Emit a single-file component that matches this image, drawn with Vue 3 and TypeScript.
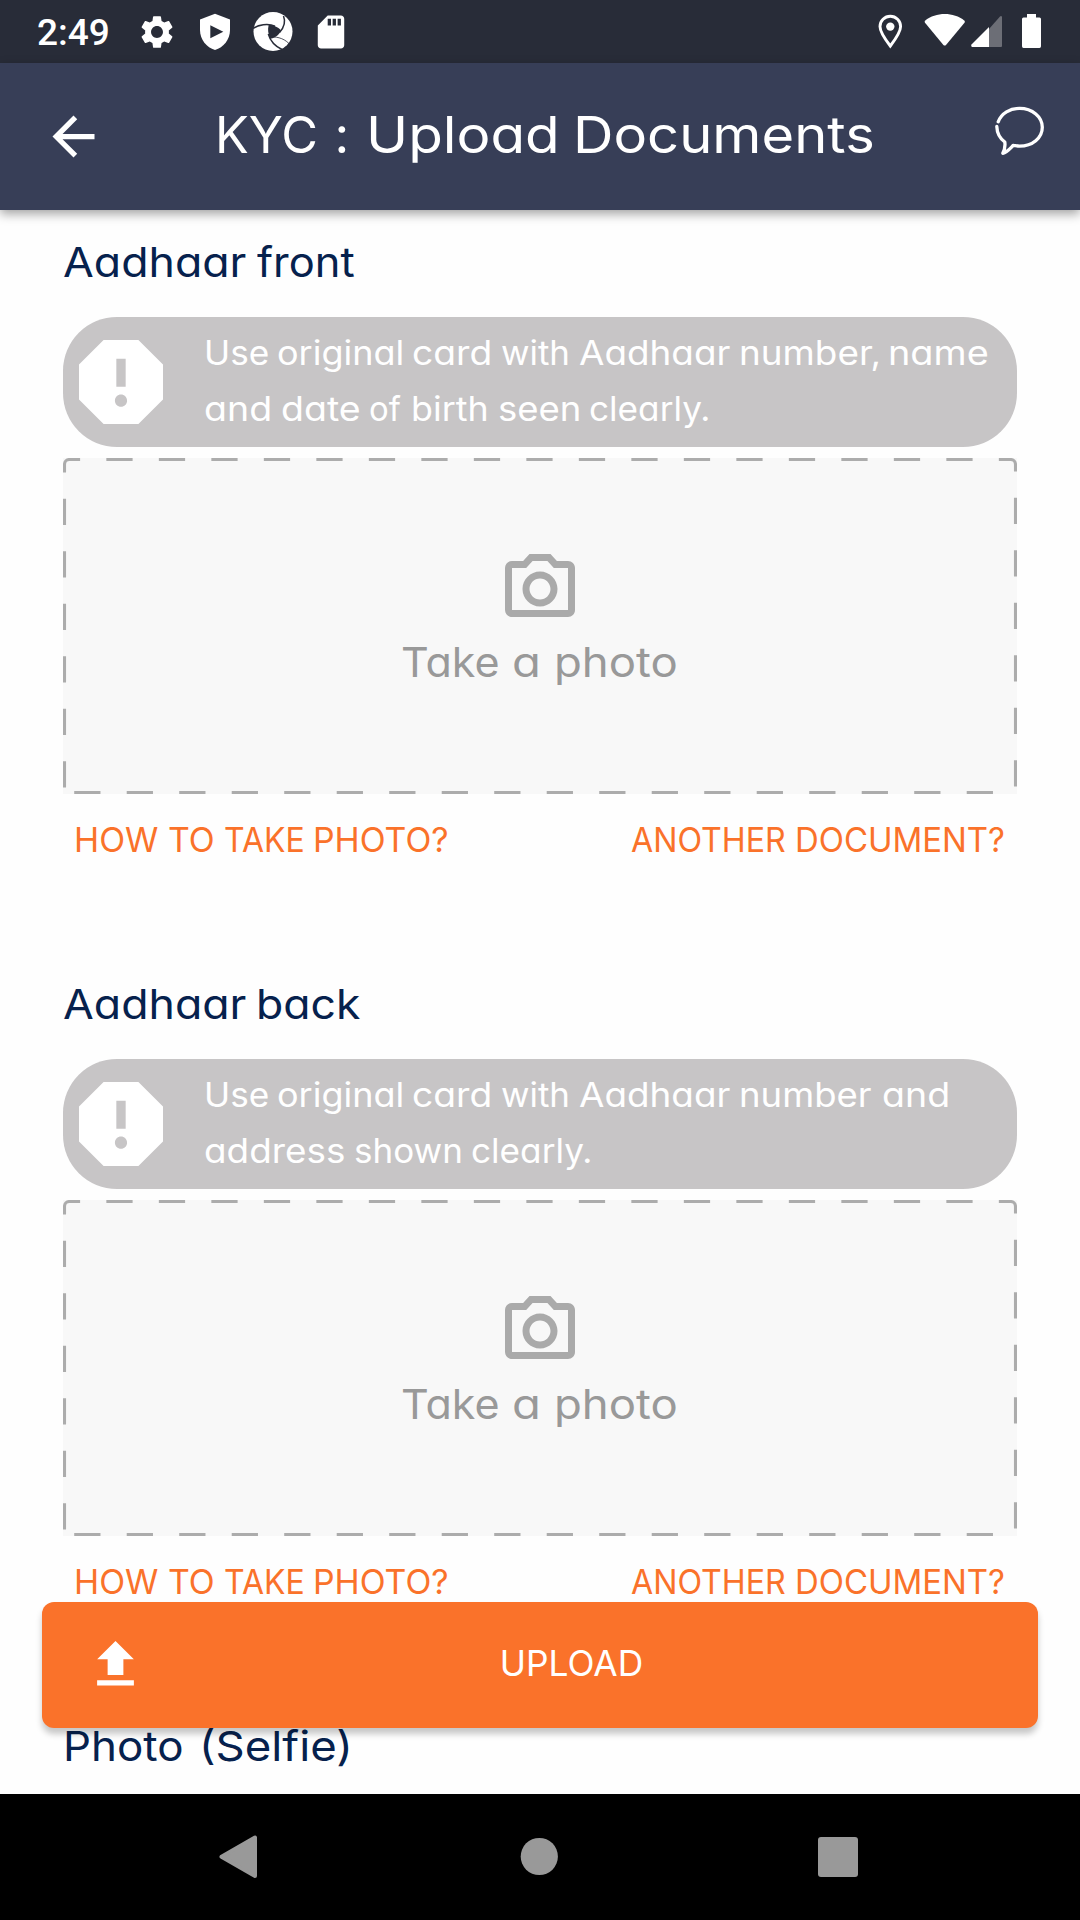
<script setup lang="ts">
import { h, type FunctionalComponent } from 'vue'

// One word: text, distance to the start of the next word, horizontal stretch
type Word = [text: string, advance: number, stretch: number]

interface DocumentSection {
  title: Word[]
  hint: Word[][]
}

const Words: FunctionalComponent<{ items: Word[] }> = (props) =>
  h(
    'span',
    { class: 'words' },
    props.items.map(([text, advance, stretch], i) =>
      h('span', { class: 'word', style: { width: `${advance}px` } }, [
        h(
          'span',
          { class: 'glyphs', style: { transform: `scaleX(${stretch})` } },
          i < props.items.length - 1 ? `${text} ` : text,
        ),
      ]),
    ),
  )
Words.props = ['items']

const pageTitle: Word[] = [
  ['KYC', 119.5, 0.986],
  [':', 31, 1],
  ['Upload', 207.5, 1.11],
  ['Documents', 300, 1.1],
]

const sections: DocumentSection[] = [
  {
    title: [['Aadhaar', 194, 1.089], ['front', 98, 1.06]],
    hint: [
      [
        ['Use', 72.5, 1.05],
        ['original', 135, 1.075],
        ['card', 89.7, 1.11],
        ['with', 78, 1.04],
        ['Aadhaar', 159.5, 1.1],
        ['number,', 149.5, 1.1],
        ['name', 102, 1.13],
      ],
      [
        ['and', 77, 1.12],
        ['date', 88, 1.12],
        ['of', 42, 0.98],
        ['birth', 87, 1.07],
        ['seen', 91, 1.09],
        ['clearly.', 121, 1.05],
      ],
    ],
  },
  {
    title: [['Aadhaar', 193, 1.089], ['back', 103, 1.085]],
    hint: [
      [
        ['Use', 72.5, 1.05],
        ['original', 135, 1.075],
        ['card', 89.7, 1.11],
        ['with', 78, 1.04],
        ['Aadhaar', 159.5, 1.1],
        ['number', 143.5, 1.09],
        ['and', 68, 1.12],
      ],
      [
        ['address', 149.7, 1.1],
        ['shown', 117, 1.045],
        ['clearly.', 121, 1.05],
      ],
    ],
  },
]

const takePhoto: Word[] = [['Take', 111, 1.05], ['a', 41.5, 1.15], ['photo', 123, 1.11]]
const howTo: Word[] = [['HOW', 94, 1.01], ['TO', 56, 1.01], ['TAKE', 89.5, 0.955], ['PHOTO?', 136, 1.01]]
const another: Word[] = [['ANOTHER', 164, 0.96], ['DOCUMENT?', 210, 0.983]]
const upload: Word[] = [['UPLOAD', 145, 1]]
const selfie: Word[] = [['Photo', 136, 1.07], ['(Selfie)', 152, 1.11]]
</script>

<template>
  <div class="screen">
    <div class="status">
      <span class="clock">2:49</span>
      <div class="notifications">
        <svg width="40" height="40" viewBox="-0.1 -0.1 24.2 24.2" fill="#fff">
          <path d="M19.14 12.94c.04-.3.06-.61.06-.94 0-.32-.02-.64-.07-.94l2.03-1.58c.18-.14.23-.41.12-.61l-1.92-3.32c-.12-.22-.37-.29-.59-.22l-2.39.96c-.5-.38-1.03-.7-1.62-.94l-.36-2.54c-.04-.24-.24-.41-.48-.41h-3.84c-.24 0-.43.17-.47.41l-.36 2.54c-.59.24-1.13.57-1.62.94l-2.39-.96c-.22-.08-.47 0-.59.22L2.74 8.87c-.12.21-.08.47.12.61l2.03 1.58c-.05.3-.09.63-.09.94s.02.64.07.94l-2.03 1.58c-.18.14-.23.41-.12.61l1.92 3.32c.12.22.37.29.59.22l2.39-.96c.5.38 1.03.7 1.62.94l.36 2.54c.05.24.24.41.48.41h3.84c.24 0 .44-.17.47-.41l.36-2.54c.59-.24 1.13-.56 1.62-.94l2.39.96c.22.08.47 0 .59-.22l1.92-3.32c.12-.22.07-.47-.12-.61l-2.01-1.58zM12 15.6c-1.98 0-3.6-1.62-3.6-3.6s1.62-3.6 3.6-3.6 3.6 1.62 3.6 3.6-1.62 3.6-3.6 3.6z" />
        </svg>
        <svg width="40" height="40" viewBox="195 12 40 40">
          <path d="M215 13.7L230 19.5V30C230 39.5 223.5 47.5 215 50C206.5 47.5 200 39.5 200 30V19.5Z" fill="#fff" />
          <path d="M210.3 25.2V38.2L223.3 31.7Z" fill="#282c38" />
        </svg>
        <svg width="40" height="40" viewBox="253 12 40 40">
          <circle cx="273" cy="31.5" r="19.5" fill="#fff" />
          <path d="M268.7 25C273 24.8 278 27 280.8 30.2C280 34 276 37.5 270.5 38.8C267.8 34 267.6 29 268.7 25Z" fill="#282c38" />
          <g fill="none" stroke="#282c38" stroke-width="1.5">
            <path d="M253 28.5C258 25 268 23 275 26.3" />
            <path d="M283.5 16C285.5 21 284.5 27 279.5 32.5" />
            <path d="M268.3 34C270 40 274.5 46 282 49.5" />
            <path d="M271 37C278 36.5 286 39 291 46" stroke-width="0.8" />
          </g>
        </svg>
        <svg width="40" height="40" viewBox="-0.1 -0.1 24.2 24.2" fill="#fff">
          <path d="M18 2h-8L4.02 8 4 20c0 1.1.9 2 2 2h12c1.1 0 2-.9 2-2V4c0-1.1-.9-2-2-2zm-6 6h-2V4h2v4zm3 0h-2V4h2v4zm3 0h-2V4h2v4z" />
        </svg>
      </div>
      <svg class="system" width="180" height="63" viewBox="870 0 180 63">
        <path d="M890.3 46C884.5 38.5 880 32 880 26.5A10.3 10.3 0 0 1 900.6 26.5C900.6 32 896 38.5 890.3 46Z" fill="none" stroke="#fff" stroke-width="2.9" />
        <circle cx="890.3" cy="26.6" r="4.2" fill="#fff" />
        <path d="M925 20.8C936 11.9 953.5 11.9 964.5 20.8Q965.3 21.8 964.5 22.8L946 45Q944.7 46.2 943.4 45L925 22.8Q924.2 21.8 925 20.8Z" fill="#fff" />
        <path d="M989 29V47H1001Q1002 47 1002 46V17Q1001.5 15.5 1000 16.5Z" fill="#6c6e76" />
        <path d="M989 27V47H972Q970.5 46 971.5 44.5Z" fill="#fff" />
        <path d="M1027 14H1036V17.5H1039.5Q1041 17.5 1041 19V46.3Q1041 48 1039.5 48H1023.5Q1022 48 1022 46.3V19Q1022 17.5 1023.5 17.5H1027Z" fill="#fff" />
      </svg>
    </div>

    <header class="bar">
      <svg class="back" width="63" height="63" viewBox="0 0 24 24" fill="#fff">
        <path d="M20 11H7.83l5.59-5.59L12 4l-8 8 8 8 1.41-1.41L7.83 13H20v-2z" />
      </svg>
      <h1><Words :items="pageTitle" /></h1>
      <svg class="chat" width="54" height="54" viewBox="992 104 54 54" fill="none" stroke="#fff" stroke-width="3.3" stroke-linecap="round" stroke-linejoin="round">
        <path d="M998.2 121.8C1001.5 113 1010 108.4 1019.5 108.4C1032.5 108.4 1042.3 116.8 1042.3 127.3C1042.3 138 1032.500 146.200 1019.500 146.200C1017 146.200 1015.500 145.600 1013.300 145.300C1010.500 148 1007 152.500 1002.800 153.300C1004.500 150 1005.300 145.500 1004.800 142C1000 138.500 997 132.500 996.800 126.500" />
      </svg>
    </header>

    <main class="content">
      <section v-for="(section, i) in sections" :key="i" class="document">
        <h2><Words :items="section.title" /></h2>
        <div class="hint">
          <svg width="112" height="112" viewBox="0 0 24 24" fill="#fff">
            <path d="M15.73 3H8.27L3 8.27v7.46L8.27 21h7.46L21 15.73V8.27L15.73 3zM12 17.3c-.72 0-1.3-.58-1.3-1.3 0-.72.58-1.3 1.3-1.3.72 0 1.3.58 1.3 1.3 0 .72-.58 1.3-1.3 1.3zm1-4.3h-2V7h2v6z" />
          </svg>
          <div class="hint-text">
            <Words v-for="(line, n) in section.hint" :key="n" :items="line" />
          </div>
        </div>
        <div class="drop">
          <svg class="dashes" width="954" height="336" viewBox="0 0 954 336" fill="none" stroke="#acacac" stroke-width="3.1" stroke-dasharray="26.25">
            <path d="M1.5 329.5V6.500A5 5 0 0 1 6.500 1.500H947.500A5 5 0 0 1 952.500 6.500V329.500A5 5 0 0 1 947.500 334.500H6.500" />
          </svg>
          <svg width="84" height="84" viewBox="0 0 24 24" fill="#aaa">
            <path d="M14.12 4l1.83 2H20v12H4V6h4.05l1.83-2h4.24M15 2H9L7.17 4H4c-1.1 0-2 .9-2 2v12c0 1.1.9 2 2 2h16c1.1 0 2-.9 2-2V6c0-1.1-.9-2-2-2h-3.17L15 2zm-3 7c1.65 0 3 1.35 3 3s-1.35 3-3 3-3-1.35-3-3 1.35-3 3-3m0-2c-2.76 0-5 2.24-5 5s2.24 5 5 5 5-2.24 5-5-2.24-5-5-5z" />
          </svg>
          <span class="drop-label"><Words :items="takePhoto" /></span>
        </div>
        <div class="links">
          <a><Words :items="howTo" /></a>
          <a><Words :items="another" /></a>
        </div>
      </section>
      <section class="document">
        <h2><Words :items="selfie" /></h2>
      </section>

      <button class="upload" type="button">
        <svg class="upload-icon" width="63" height="63" viewBox="0 0 24 24" fill="#fff">
          <path d="M9 16h6v-6h4l-7-7-7 7h4zm-4 2h14v2H5z" />
        </svg>
        <span class="upload-label"><Words :items="upload" /></span>
      </button>
    </main>

    <nav class="system-nav">
      <svg width="44" height="48" viewBox="216 1833 44 48">
        <path d="M255 1837.5V1876L221.5 1856.8Z" fill="#999" stroke="#999" stroke-width="4" stroke-linejoin="round" />
      </svg>
      <svg width="40" height="48" viewBox="518 1833 40 48">
        <circle cx="539.300" cy="1856.500" r="18.600" fill="#999" />
      </svg>
      <svg width="44" height="48" viewBox="816 1833 44 48">
        <rect x="818" y="1837" width="40" height="40" rx="3" fill="#999" />
      </svg>
    </nav>
  </div>
</template>

<style>
body {
  margin: 0;
}
.words {
  display: flex;
  white-space: pre;
}
.word {
  display: block;
  flex: none;
}
.glyphs {
  display: inline-block;
  transform-origin: 0 50%;
}
</style>

<style scoped>
.screen {
  width: 1080px;
  height: 1920px;
  display: flex;
  flex-direction: column;
  overflow: hidden;
  background: #fefefe;
  font-family: Inter, "Open Sans", sans-serif;
  font-feature-settings: "cv11" 1;
}
svg {
  display: block;
  flex: none;
}
.status {
  height: 63px;
  flex: none;
  display: flex;
  background: #282c38;
}
.clock {
  width: 100px;
  padding-left: 37px;
  font: 500 37px/66px Roboto, sans-serif;
  color: #fff;
}
.notifications {
  display: flex;
  gap: 18px;
  padding-top: 12px;
}
.system {
  margin-left: auto;
  margin-right: 30px;
}
.bar {
  height: 147px;
  flex: none;
  display: flex;
  align-items: flex-start;
  position: relative;
  z-index: 1;
  background: #373e57;
  color: #fff;
  box-shadow: 0 4px 10px rgba(0, 0, 0, 0.36);
}
.back {
  margin: 42px 0 0 42px;
}
h1 {
  flex: 1;
  margin: 42px 0 0 110px;
  font-size: 51px;
  line-height: 60px;
  font-weight: 400;
}
.chat {
  margin: 41px 34px 0 0;
}
.content {
  flex: 1;
  min-height: 0;
  position: relative;
  overflow: hidden;
}
.document {
  height: 742px;
  padding: 0 63px;
  box-sizing: border-box;
  display: flow-root;
}
h2 {
  margin: 22px 0 25px;
  font-size: 41px;
  line-height: 60px;
  font-weight: 400;
  color: #06214d;
}
.hint {
  display: flex;
  height: 130px;
  padding: 0 2px;
  align-items: center;
  border-radius: 54px;
  background: #c7c5c6;
  box-sizing: border-box;
}
.hint-text {
  margin-left: 27px;
  font-size: 33.5px;
  line-height: 56px;
  color: #fff;
  padding-bottom: 1.5px;
}
.drop {
  position: relative;
  display: flex;
  flex-direction: column;
  align-items: center;
  height: 336px;
  margin-top: 11px;
  padding-top: 89px;
  box-sizing: border-box;
  background: #f8f8f8;
}
.dashes {
  position: absolute;
  inset: 0;
}
.drop-label {
  margin: 1px 0 0 -2px;
  font-size: 41px;
  line-height: 60px;
  color: #999;
}
.links {
  display: flex;
  justify-content: space-between;
  margin-top: 16px;
  padding: 0 12px 0 10.5px;
  font-size: 33.5px;
  line-height: 60px;
  color: #fa722a;
}
.upload {
  position: absolute;
  left: 42px;
  right: 42px;
  top: 1392px;
  height: 126px;
  display: flex;
  align-items: center;
  padding: 0 42px;
  border: 0;
  border-radius: 12px;
  background: #fa722a;
  color: #fff;
  font: inherit;
  font-feature-settings: inherit;
  box-shadow: 0 6px 6px rgba(0, 0, 0, 0.22);
}
.upload-icon {
  margin-top: -1px;
}
.upload-label {
  margin: -3px 0 0 352px;
  font-size: 35.3px;
  line-height: 60px;
}
.system-nav {
  height: 126px;
  flex: none;
  display: flex;
  justify-content: space-between;
  align-items: center;
  padding: 0 220px 0 216px;
  background: #000;
}
</style>
